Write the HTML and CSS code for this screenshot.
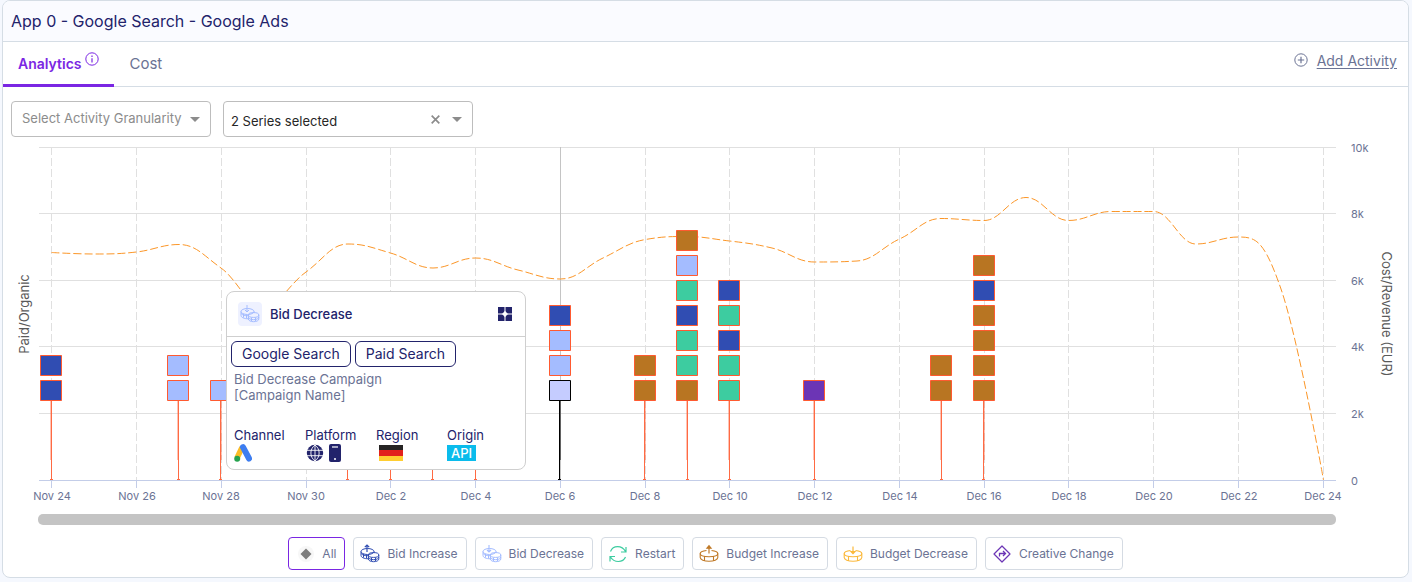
FILE: index.html
```html
<!DOCTYPE html>
<html lang="en">
<head>
<meta charset="utf-8">
<title>App 0 - Google Search - Google Ads</title>
<link rel="stylesheet" href="styles.css">
</head>
<body>
<svg class="sprite" aria-hidden="true">
  <symbol id="coins" viewBox="0 0 20 20">
    <g fill="none" stroke="currentColor" stroke-width="1">
      <ellipse cx="7.500" cy="7.500" rx="6.500" ry="3"/>
      <path d="M1 7.500v4c0 1.800 3 3.300 7.300 3.300M1.200 9.500c1 1.500 3.500 2.300 7 2.200M3.500 10v3.500M6.500 11v3.500M14 7.500v1.500"/>
      <ellipse cx="13.600" cy="11" rx="5.200" ry="2.400"/>
      <path d="M8.400 11v4c0 1.500 2.200 2.700 5.200 2.700s5.200-1.200 5.200-2.700v-4M8.400 13c0 1.500 2.200 2.700 5.200 2.700s5.200-1.200 5.200-2.700M11.500 13.500v3.500M15.500 13.500v3.500"/>
    </g>
  </symbol>
  <symbol id="budget" viewBox="0 0 20 20">
    <g fill="none" stroke="currentColor" stroke-width="1.100">
      <path d="M7.500 6.500C4 6.900 1.200 8 1.200 9.600c0 1.900 3.900 3.200 8.800 3.200s8.800-1.300 8.800-3.200c0-1.600-2.800-2.700-6.300-3.100"/>
      <path d="M1.200 9.600v4c0 2.100 3.900 3.600 8.800 3.600s8.800-1.500 8.800-3.600v-4M5.500 12.300v4M14.500 12.300v4"/>
    </g>
  </symbol>
</svg>

<main class="card">
  <header class="card-header"><h1 class="card-title">App 0 - Google Search - Google Ads</h1></header>

  <nav class="tabs">
    <button class="tab tab-active" type="button">Analytics
      <svg class="info" viewBox="0 0 14 14" aria-hidden="true"><circle cx="7" cy="7" r="6.200" fill="none" stroke="currentColor"/><path d="M7 6.200v4.300M7 3.600v1.300" fill="none" stroke="currentColor" stroke-width="1.200"/></svg>
    </button>
    <button class="tab" type="button">Cost</button>
    <a class="add" href="#">
      <svg class="add-icon" viewBox="0 0 14 14" aria-hidden="true"><path d="M7 3.800v6.400M3.800 7h6.400" stroke="currentColor" stroke-width="1.200"/><circle cx="7" cy="7" r="6.200" fill="none" stroke="currentColor"/></svg>
      <span class="add-text">Add Activity</span>
    </a>
  </nav>

  <div class="filters">
    <div class="field field-granularity">
      <select class="select select-empty" aria-label="Activity granularity"><option>Select Activity Granularity</option></select>
      <svg class="caret" viewBox="0 0 10 5" aria-hidden="true"><path d="M0 0h10L5 5z" fill="currentColor"/></svg>
    </div>
    <div class="field field-series">
      <select class="select select-filled" aria-label="Series"><option>2 Series selected</option></select>
      <button class="clear" type="button" aria-label="Clear series"><svg class="clear-icon" viewBox="0 0 8 8"><path d="M.6.6l6.800 6.800M7.400.6L.6 7.400" stroke="currentColor" stroke-width="1.500"/></svg></button>
      <svg class="caret" viewBox="0 0 10 5" aria-hidden="true"><path d="M0 0h10L5 5z" fill="currentColor"/></svg>
    </div>
  </div>

  <section class="chart">
    <svg class="plot" viewBox="3 137 1405 391" role="img" aria-label="Activity and cost by day">
      <path class="grid" d="M39 147.500H1336M39 213.500H1336M39 280.500H1336M39 346.500H1336M39 413.500H1336"/>
      <path class="grid grid-days" d="M51.500 147V480M136.500 147V480M221.500 147V480M306.500 147V480M390.500 147V480M475.500 147V480M645.500 147V480M729.500 147V480M814.500 147V480M899.500 147V480M984.500 147V480M1068.500 147V480M1153.500 147V480M1238.500 147V480M1323.500 147V480"/>
      <path class="crosshair" d="M560.500 147V480"/>
      <path class="axis" d="M39 480.500H1336M51.500 480v8M136.500 480v8M221.500 480v8M306.500 480v8M390.500 480v8M475.500 480v8M560.500 480v8M645.500 480v8M729.500 480v8M814.500 480v8M899.500 480v8M984.500 480v8M1068.500 480v8M1153.500 480v8M1238.500 480v8M1323.500 480v8"/>
      <path class="cost" d="M51.500 252.500C51.500 252.500 77 254 94 254S119 254 136.500 252S162 244.500 179 244.500S204 256 221 268S246 306 263 306S289 284 306 272S331 244 348 244S373 248 390.500 253S416 268 433 268S458 258 475.500 258S501 266 518 270S543 279 560.500 279S586 266 603 258S628 242.500 645.500 239.500S670 236.500 687 236.500S712 239 729.500 241S755 244 772 248S797 262 814.500 262S840 262 857 261S882 247 899.500 239S924 218.500 941 218.500S967 220.500 984 220.500S1009 197.500 1026 197.500S1051 220.500 1068.500 220.500S1094 211.500 1111 211.500S1136 211.500 1153.500 211.500S1179 244 1196 244S1221 237 1238.500 237S1264 240 1281 289S1323.500 480 1323.500 480"/>
      <path class="stem-soft" d="M50.500 401v59M177.500 401v59M221.500 401v59M645.500 401v59M686.500 401v59M728.500 401v59M813.500 401v59M940.500 401v59M984.500 401v59"/>
      <path class="stem" d="M51.500 401v79M178.500 401v79M220.500 401v79M347.500 401v79M390.500 401v79M432.500 401v79M475.500 401v79M644.500 401v79M687.500 401v79M729.500 401v79M814.500 401v79M941.500 401v79M983.500 401v79"/>
      <path class="stem" d="M50 479.500h3M177 479.500h3M219 479.500h3M346 479.500h3M389 479.500h3M431 479.500h3M474 479.500h3M643 479.500h3M686 479.500h3M728 479.500h3M813 479.500h3M940 479.500h3M982 479.500h3"/>
      <path class="stem-black-soft" d="M560.500 401v59"/>
      <path class="stem-black" d="M559.500 401v79M558 479.500h3"/>
      <g class="bid-up">
        <path d="M40.500 355.500h21v20h-21zM40.500 380.500h21v20h-21zM549.500 305.500h21v20h-21zM676.500 305.500h21v20h-21zM718.500 280.500h21v20h-21zM718.500 330.500h21v20h-21zM973.500 280.500h21v20h-21z"/>
      </g>
      <g class="bid-down">
        <path d="M167.500 355.500h21v20h-21zM167.500 380.500h21v20h-21zM210.500 380.500h21v20h-21zM549.500 330.500h21v20h-21zM549.500 355.500h21v20h-21zM676.500 255.500h21v20h-21z"/>
      </g>
      <g class="restart">
        <path d="M676.500 280.500h21v20h-21zM676.500 330.500h21v20h-21zM676.500 355.500h21v20h-21zM718.500 305.500h21v20h-21zM718.500 355.500h21v20h-21zM718.500 380.500h21v20h-21z"/>
      </g>
      <g class="budget-up">
        <path d="M634.500 355.500h21v20h-21zM634.500 380.500h21v20h-21zM676.500 230.500h21v20h-21zM676.500 380.500h21v20h-21zM930.500 355.500h21v20h-21zM930.500 380.500h21v20h-21zM973.500 255.500h21v20h-21zM973.500 305.500h21v20h-21zM973.500 330.500h21v20h-21zM973.500 355.500h21v20h-21zM973.500 380.500h21v20h-21z"/>
      </g>
      <path class="creative" d="M803.500 380.500h21v20h-21z"/>
      <path class="selected" d="M549.500 380.500h21v20h-21z"/>
      <g class="ticks ticks-days">
        <text x="52" y="500">Nov 24</text><text x="137" y="500">Nov 26</text><text x="221" y="500">Nov 28</text><text x="306" y="500">Nov 30</text>
        <text x="391" y="500">Dec 2</text><text x="476" y="500">Dec 4</text><text x="560" y="500">Dec 6</text><text x="645" y="500">Dec 8</text>
        <text x="730" y="500">Dec 10</text><text x="815" y="500">Dec 12</text><text x="900" y="500">Dec 14</text><text x="984" y="500">Dec 16</text>
        <text x="1069" y="500">Dec 18</text><text x="1154" y="500">Dec 20</text><text x="1239" y="500">Dec 22</text><text x="1323" y="500">Dec 24</text>
      </g>
      <g class="ticks">
        <text x="1351" y="152">10k</text><text x="1351" y="218">8k</text><text x="1351" y="285">6k</text><text x="1351" y="351">4k</text><text x="1351" y="418">2k</text><text x="1351" y="485">0</text>
      </g>
      <text class="axis-title" transform="translate(29 314) rotate(-90)">Paid/Organic</text>
      <text class="axis-title" transform="translate(1382 314) rotate(90)">Cost/Revenue (EUR)</text>
      <rect class="scrollbar" x="38" y="514" width="1298" height="11" rx="5"/>
    </svg>

    <aside class="tooltip">
      <header class="tooltip-header">
        <span class="badge"><svg class="badge-icon" viewBox="0 0 20 20" aria-hidden="true"><use href="#coins"/><path d="M7 1v7M5 6l2 2 2-2" fill="none" stroke="currentColor"/></svg></span>
        <strong class="tooltip-title">Bid Decrease</strong>
        <svg class="tooltip-mark" viewBox="0 0 16 16" aria-hidden="true"><path fill="currentColor" d="M1 1h6.500v3.500c0 1.500-1.500 3-3 3H1zM8.500 1H15v6.500h-3.500c-1.500 0-3-1.500-3-3zM1 8.500h3.500c1.500 0 3 1.500 3 3V15H1zM15 8.500V15H8.500v-3.500c0-1.500 1.500-3 3-3z"/></svg>
      </header>
      <div class="tooltip-body">
        <div class="tags"><span class="tag">Google Search</span><span class="tag">Paid Search</span></div>
        <p class="campaign">Bid Decrease Campaign<br>[Campaign Name]</p>
        <dl class="facts">
          <div class="fact"><dt>Channel</dt><dd><svg class="fact-icon" viewBox="0 0 18 18" aria-hidden="true"><path d="M8 3.500L3 14" stroke="#fbbc26" stroke-width="5.500"/><path d="M9 3.200L15 14.500" stroke="#3d7df0" stroke-width="6" stroke-linecap="round"/><circle cx="3.200" cy="14.800" r="3" fill="#26a24e"/></svg></dd></div>
          <div class="fact"><dt>Platform</dt><dd>
            <svg class="fact-icon fact-globe" viewBox="0 0 18 18" aria-hidden="true"><circle cx="9" cy="9" r="8.200" fill="#22236b"/><path d="M1 6.300h16M1 11.700h16M9 1v16M9 1C3.500 5 3.500 13 9 17M9 1c5.500 4 5.500 12 0 16" fill="none" stroke="#fff" stroke-width=".9"/></svg>
            <svg class="fact-icon fact-phone" viewBox="0 0 12 18" aria-hidden="true"><rect width="12" height="18" rx="2" fill="#22236b"/><path d="M3 3h6" stroke="#fff" stroke-width="1.200"/><circle cx="6" cy="15" r="1" fill="#fff"/></svg>
          </dd></div>
          <div class="fact"><dt>Region</dt><dd><svg class="flag" viewBox="0 0 24 16" aria-hidden="true"><path fill="#262424" d="M0 0h24v6H0z"/><path fill="#e2211c" d="M0 5h24v6H0z"/><path fill="#ffce31" d="M0 11h24v5H0z"/></svg></dd></div>
          <div class="fact"><dt>Origin</dt><dd><span class="api">API</span></dd></div>
        </dl>
      </div>
    </aside>
  </section>

  <div class="legend">
    <button class="chip chip-all" type="button"><svg class="chip-icon" viewBox="0 0 20 20" aria-hidden="true"><circle cx="11" cy="10" r="8" fill="#f7f7f7"/><path d="M11 4.500l5.500 5.500-5.500 5.500L5.500 10z" fill="#7d7d7d"/></svg>All</button>
    <button class="chip" type="button"><svg class="chip-icon c-bid-up" viewBox="0 0 20 20" aria-hidden="true"><use href="#coins"/><path d="M7 8V1M4.800 3.200L7 1l2.200 2.200" fill="none" stroke="currentColor" stroke-width="1.200"/></svg>Bid Increase</button>
    <button class="chip" type="button"><svg class="chip-icon c-bid-down" viewBox="0 0 20 20" aria-hidden="true"><use href="#coins"/><path d="M7 1v7M5 6l2 2 2-2" fill="none" stroke="currentColor" stroke-width="1.100"/></svg>Bid Decrease</button>
    <button class="chip" type="button"><svg class="chip-icon c-restart" viewBox="0 0 20 20" aria-hidden="true"><path d="M2.500 7.500C5 1 14 1 17.500 7.500M18 3v5h-5M17.500 13C15 19 6 19 2.500 13M2 17.500v-5h5" fill="none" stroke="currentColor" stroke-width="1.200"/></svg>Restart</button>
    <button class="chip" type="button"><svg class="chip-icon c-budget-up" viewBox="0 0 20 20" aria-hidden="true"><use href="#budget"/><path d="M10 9.500V3M8 4.200l2-2.400 2 2.400z" fill="currentColor" stroke="currentColor" stroke-width="1.200"/></svg>Budget Increase</button>
    <button class="chip" type="button"><svg class="chip-icon c-budget-down" viewBox="0 0 20 20" aria-hidden="true"><use href="#budget"/><path d="M10 2.500V8M8 7.500l2 2.200 2-2.200z" fill="currentColor" stroke="currentColor" stroke-width="1.200"/></svg>Budget Decrease</button>
    <button class="chip" type="button"><svg class="chip-icon c-creative" viewBox="0 0 20 20" aria-hidden="true"><path d="M10 2l8 8-8 8-8-8z" fill="none" stroke="currentColor" stroke-width="1.200" stroke-linejoin="round"/><path d="M7.500 12.500V9.500H13M11 7l2.500 2.500L11 12" fill="none" stroke="currentColor" stroke-width="1.300"/></svg>Creative Change</button>
  </div>
</main>
</body>
</html>
```
FILE: styles.css
```css
* { box-sizing: border-box; }
body { margin: 0; padding: 0 3px 3px 2px; background: #f5f8fe; font-family: Inter, "Liberation Sans", sans-serif; color: #22236b; }
button, select { font: inherit; color: inherit; background: none; border: 0; margin: 0; padding: 0; }
.sprite { display: none; }

.card { background: #fff; border: 1px solid #d5dde5; border-radius: 8px; overflow: hidden; }
.card-header { height: 41px; padding: 0 8px; display: flex; align-items: center; background: #fafbff; border-bottom: 1px solid #d5dde5; }
.card-title { margin: 0; font-size: 16px; font-weight: 400; line-height: 20px; }

.tabs { height: 45px; display: flex; border-bottom: 1px solid #d5dde5; }
.tab { display: flex; align-items: center; gap: 3px; padding: 0 16px 2px; font-size: 15px; color: #6b7394; }
.tab-active { padding: 0 15px; margin-bottom: -1px; border-bottom: 3px solid #7a26e3; color: #7a26e3; font-size: 14px; font-weight: 600; }
.info { width: 14px; height: 14px; margin-bottom: 8px; }
.add { margin-left: auto; padding: 0 11px 8px 0; display: flex; align-items: center; gap: 9px; font-size: 14px; color: #6b7394; text-decoration: none; }
.add-icon { width: 14px; height: 14px; }
.add-text { text-decoration: underline; text-underline-offset: 2px; }

.filters { display: flex; gap: 12px; padding: 14px 8px 0; }
.field { height: 36px; display: flex; align-items: center; border: 1px solid #bdbdbd; border-radius: 4px; color: #8c8c8c; }
.field-granularity { width: 200px; padding: 0 10px; }
.field-series { width: 250px; padding: 0 10px 0 7px; }
.select { flex: 1; min-width: 0; appearance: none; font-size: 13px; color: #262626; outline: 0; }
.select-empty { color: #8c8c8c; padding-bottom: 2px; }
.select-filled { padding-top: 4px; }
.caret { width: 10px; height: 5px; }
.clear { display: flex; margin-right: 12px; }
.clear-icon { width: 9px; height: 9px; }

.chart { position: relative; }
.plot { display: block; width: 100%; height: auto; }
.plot path { fill: none; stroke-width: 1; }
.plot .grid { stroke: #e0e0e0; }
.plot .grid-days { stroke-dasharray: 8 3; }
.plot .crosshair { stroke: #c4c4c4; }
.plot .axis { stroke: #c3cde8; }
.plot .cost { stroke: #fb9628; stroke-dasharray: 8 3; }
.plot .stem { stroke: #ff6a43; }
.plot .stem-soft { stroke: #ff6a43; opacity: .4; }
.plot .stem-black { stroke: #000; }
.plot .stem-black-soft { stroke: #000; opacity: .5; }
.plot .bid-up path { fill: #304db2; stroke: #ff5a30; }
.plot .bid-down path { fill: #a4bcff; stroke: #ff5a30; }
.plot .restart path { fill: #3dcca0; stroke: #ff5a30; }
.plot .budget-up path { fill: #b87522; stroke: #ff5a30; }
.plot .creative { fill: #6c35b5; stroke: #ff5a30; }
.plot .selected { fill: #c5ccff; stroke: #000; }
.ticks { font-size: 11px; fill: #6b7394; }
.ticks-days { text-anchor: middle; }
.axis-title { font-size: 13px; fill: #595959; text-anchor: middle; }
.scrollbar { fill: #c4c4c4; }

.tooltip { position: absolute; top: 154px; left: 223px; width: 300px; background: #fff; border: 1px solid #cfcfcf; border-radius: 8px; }
.tooltip-header { height: 45px; display: flex; align-items: center; gap: 8px; padding: 0 12px 0 11px; border-bottom: 1px solid #cfcfcf; }
.badge { width: 24px; height: 24px; display: grid; place-items: center; background: #eef1ff; border-radius: 4px; color: #a4bcff; }
.badge-icon { width: 20px; height: 20px; }
.tooltip-title { flex: 1; font-size: 13px; font-weight: 500; }
.tooltip-mark { width: 16px; height: 16px; }
.tooltip-body { padding: 4px 4px 8px; }
.tags { display: flex; gap: 4px; }
.tag { padding: 0 10px; border: 1px solid #22236b; border-radius: 6px; font-size: 14px; line-height: 24px; }
.campaign { margin: 4px 3px 24px; font-size: 13px; line-height: 16px; color: #6b7394; }
.facts { margin: 0 3px; display: grid; grid-template-columns: repeat(4, 71px); font-size: 13px; line-height: 16px; }
.facts dd { margin: 0; height: 18px; display: flex; align-items: center; gap: 5px; padding-top: 2px; }
.fact-icon { width: 18px; height: 18px; }
.fact-globe { margin-left: 1px; }
.fact-phone { width: 12px; }
.flag { width: 24px; height: 16px; margin-left: 3px; }
.api { padding: 0 4px; background: #0bbcec; color: #fff; font-weight: 500; }

.legend { display: flex; justify-content: center; gap: 8px; padding: 9px 8px 7px; }
.chip { height: 33px; display: flex; align-items: center; gap: 7px; padding: 0 8px 0 6px; border: 1px solid #d5dbe3; border-radius: 4px; font-size: 12px; color: #6b7394; }
.chip-all { border-color: #7a26e3; }
.chip-icon { width: 20px; height: 20px; }
.c-bid-up { color: #304db2; }
.c-bid-down { color: #a4bcff; }
.c-restart { color: #3dcca0; }
.c-budget-up { color: #c07a28; }
.c-budget-down { color: #fbb93c; }
.c-creative { color: #6c35b5; }
```
